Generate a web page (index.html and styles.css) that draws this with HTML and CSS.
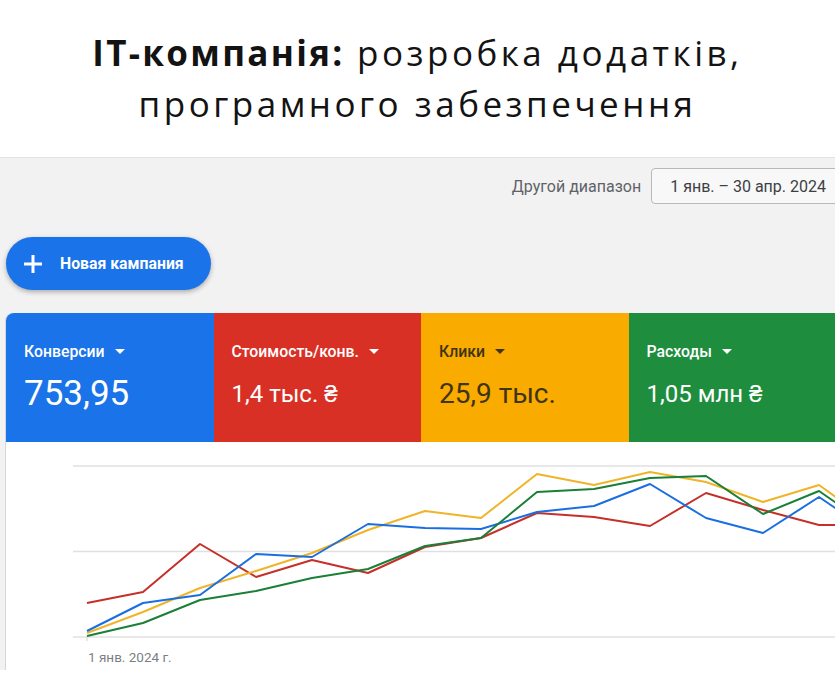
FILE: index.html
```html
<!DOCTYPE html>
<html lang="uk">
<head>
<meta charset="UTF-8" />
<meta name="viewport" content="width=device-width, initial-scale=1" />
<title>IT-компанія - Google Ads</title>
<link rel="stylesheet" href="styles.css">
</head>
<body>
  <header class="title">
    <h1><b>IT-компанія:</b> розробка додатків,<br>програмного забезпечення</h1>
  </header>

  <main class="dashboard">
    <div class="toolbar">
      <span class="range-label">Другой диапазон</span>
      <div class="range-box">1 янв. – 30 апр. 2024</div>
    </div>

    <button class="new-btn">
      <svg width="20" height="20" viewBox="0 0 20 20"><path d="M10 1v18M1 10h18" stroke="#fff" stroke-width="3" fill="none"/></svg>
      Новая кампания
    </button>

    <section class="panel">
      <div class="cards">
        <div class="card card-blue">
          <div class="card-label">Конверсии <span class="caret"></span></div>
          <div class="card-value big">753,95</div>
        </div>
        <div class="card card-red">
          <div class="card-label">Стоимость/конв. <span class="caret"></span></div>
          <div class="card-value">1,4 тыс. ₴</div>
        </div>
        <div class="card card-yellow">
          <div class="card-label">Клики <span class="caret"></span></div>
          <div class="card-value mid">25,9 тыс.</div>
        </div>
        <div class="card card-green">
          <div class="card-label">Расходы <span class="caret"></span></div>
          <div class="card-value">1,05 млн ₴</div>
        </div>
      </div>

      <div class="chart">
        <svg width="830" height="228" viewBox="6 442 830 228">
          <g class="grid">
            <line x1="73" y1="466" x2="836" y2="466"/>
            <line x1="73" y1="551.5" x2="836" y2="551.5"/>
            <line x1="73" y1="637" x2="836" y2="637"/>
            <line x1="87" y1="637" x2="87" y2="641"/>
          </g>
          <polyline class="l-red" points="87,603 143,592 200,544 256,577 312,560 368,573 425,547 481,538 537,513 594,517 650,526 706,493 763,510 819,525 875,525"/>
          <polyline class="l-yellow" points="87,633 143,612 200,588 256,571 312,553 368,530 425,511 481,518 537,474 594,485 650,472 706,482 763,502 819,485 875,525"/>
          <polyline class="l-blue" points="87,631 143,603 200,595 256,554 312,557 368,524 425,528 481,529 537,512 594,506 650,484 706,518 763,533 819,497 875,535"/>
          <polyline class="l-green" points="87,636 143,623 200,600 256,591 312,578 368,569 425,546 481,538 537,492 594,489 650,478 706,476 763,514 819,491 875,530"/>
          <text class="axis" x="88" y="662">1 янв. 2024 г.</text>
        </svg>
      </div>
    </section>
  </main>
</body>
</html>
```

FILE: styles.css
```css
body {
  margin: 0;
  width: 835px;
  height: 700px;
  overflow: hidden;
  background: #fff;
  font-family: Roboto, "Liberation Sans", sans-serif;
}
.title {
  background: #fff;
  border-bottom: 1px solid #e3e3e3;
  text-align: center;
  padding: 27px 0 28px;
}
.title h1 {
  margin: 0;
  font-family: "Open Sans", "DejaVu Sans", sans-serif;
  font-weight: 400;
  font-size: 35px;
  line-height: 51px;
  letter-spacing: 3.5px;
  color: #131313;
}
.title b {
  font-weight: 700;
  letter-spacing: 2.3px;
}
.dashboard {
  background: #f2f2f2;
  padding-top: 10px;
}
.toolbar {
  display: flex;
  justify-content: flex-end;
  align-items: center;
  gap: 10px;
  margin-right: -10px;
}
.range-label {
  font-size: 16px;
  color: #5f6368;
}
.range-box {
  height: 36px;
  box-sizing: border-box;
  display: flex;
  align-items: center;
  padding: 0 18px;
  border: 1px solid #b9b9b9;
  border-radius: 4px;
  background: #f8f8f8;
  font-size: 16px;
  color: #3c4043;
}
.new-btn {
  display: flex;
  align-items: center;
  gap: 17px;
  margin: 33px 0 0 6px;
  width: 205px;
  height: 53px;
  padding: 0 0 0 17px;
  border: none;
  border-radius: 27px;
  background: #1a73e8;
  color: #fff;
  font-family: Roboto, sans-serif;
  font-weight: 700;
  font-size: 15.8px;
  box-shadow: 0 2px 5px rgba(0,0,0,0.3);
}
.panel {
  margin: 23px 0 0 6px;
  width: 830px;
  box-shadow: -1px 0 0 #d6d6d6;
  border-top-left-radius: 8px;
  overflow: hidden;
}
.cards {
  display: grid;
  grid-template-columns: repeat(4, 207.5px);
  height: 129px;
}
.card {
  padding: 28px 0 0 18px;
  color: #fff;
}
.card-blue { background: #1a73e8; }
.card-red { background: #d93025; }
.card-yellow { background: #f9ab00; color: #3f3414; }
.card-green { background: #1e8e3e; }
.card-label {
  display: flex;
  align-items: center;
  height: 20px;
  font-size: 15.8px;
  font-weight: 500;
}
.caret {
  margin-left: 10px;
  border-left: 5px solid transparent;
  border-right: 5px solid transparent;
  border-top: 5px solid currentColor;
}
.card-value {
  margin-top: 13px;
  height: 40px;
  line-height: 40px;
  font-size: 24px;
}
.card-value.big {
  font-size: 35px;
}
.card-value.mid {
  font-size: 28px;
}
.chart {
  height: 228px;
  background: #fff;
}
.chart svg {
  display: block;
}
.grid line {
  stroke: #e0e0e0;
  stroke-width: 1.5;
}
.chart polyline {
  fill: none;
  stroke-width: 2;
  stroke-linejoin: round;
}
.l-red { stroke: #c5302a; }
.l-yellow { stroke: #f0b429; }
.l-blue { stroke: #1a6fe0; }
.l-green { stroke: #1a7f37; }
.axis {
  font-family: Roboto, sans-serif;
  font-size: 13.5px;
  fill: #7b7f84;
}
```
